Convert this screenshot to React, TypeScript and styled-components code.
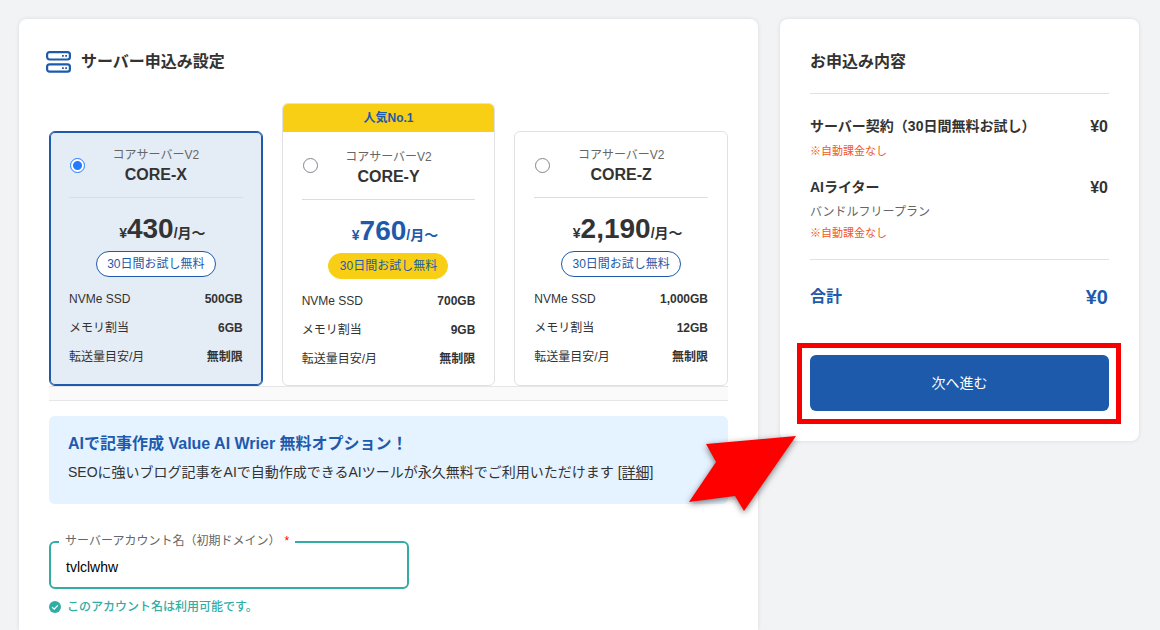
import React, { useState } from "react";
import styled, { createGlobalStyle, css } from "styled-components";

const BLUE = "#1e5aab";
const YELLOW = "#f8cf15";
const TEAL = "#31ada5";
const RED = "#f90000";
const INK = "#333";
const LINE = "#e1e1e1";

const GlobalStyle = createGlobalStyle`
  *, *::before, *::after { box-sizing: border-box; }
  body {
    margin: 0;
    background: #f2f3f5;
    color: ${INK};
    font-family: "Liberation Sans", "Noto Sans CJK JP", sans-serif;
    font-size: 14px;
    line-height: 20px;
  }
  h1, h2, h3, p, dl, dd, ul { margin: 0; padding: 0; }
`;

const Page = styled.div`
  display: grid;
  grid-template-columns: minmax(0, 1fr) 359px;
  gap: 22px;
  min-height: 100vh;
  padding: 19px 21px 0 19px;
`;

const Panel = styled.section`
  background: #fff;
  border-radius: 8px;
  box-shadow: 0 0 4px rgba(0, 0, 0, 0.1);
`;

const Settings = styled(Panel)`
  padding: 31px 30px 14px;
  border-radius: 8px 8px 0 0;
`;

const Summary = styled(Panel)`
  position: relative;
  align-self: start;
  padding: 31px 30px 30px;
`;

const Heading = styled.h2`
  display: flex;
  align-items: center;
  gap: 10px;
  font-size: 16px;
  line-height: 24px;
  font-weight: 700;
`;

const SettingsHeading = styled(Heading)`
  margin: 0 -3px 29px;
`;

const Plans = styled.div`
  display: grid;
  grid-template-columns: repeat(3, minmax(0, 1fr));
  align-items: end;
  gap: 19px;
`;

const PlanCard = styled.label<{ $selected: boolean }>`
  display: block;
  border: 1px solid ${LINE};
  border-radius: 6px;
  background: #fff;
  overflow: hidden;
  cursor: pointer;
  ${(p) =>
    p.$selected &&
    css`
      border-color: ${BLUE};
      background: #e4ecf5;
      box-shadow: inset 0 0 0 1px ${BLUE};
    `}
`;

const Ribbon = styled.div`
  margin: 0 -1px;
  background: ${YELLOW};
  color: ${BLUE};
  font-size: 12px;
  line-height: 28px;
  font-weight: 700;
  text-align: center;
`;

const PlanBody = styled.div<{ $featured: boolean }>`
  padding: ${(p) => (p.$featured ? "14px 19px 11px" : "14px 19px 13px")};
`;

const PlanHead = styled.div<{ $featured: boolean }>`
  display: grid;
  grid-template-columns: 16px 1fr 16px;
  padding-bottom: 11px;
  border-bottom: 1px solid #d9dee3;
  text-align: center;
  & > div { padding-top: ${(p) => (p.$featured ? 2 : 0)}px; }
`;

const Radio = styled.input`
  appearance: none;
  width: 15px;
  height: 15px;
  margin: 12px 0 0 1px;
  border: 1px solid #85858f;
  border-radius: 50%;
  background: #fff;
  &:checked {
    border-color: #237bff;
    background: radial-gradient(circle, #237bff 4px, #fff 5px);
  }
`;

const Series = styled.p`
  color: #666;
  font-size: 12px;
  line-height: 18px;
`;

const PlanName = styled.h3`
  font-size: 16px;
  line-height: 22px;
`;

const Price = styled.p<{ $featured: boolean }>`
  margin: 11px 0 2px;
  padding-left: 13px;
  color: ${(p) => (p.$featured ? BLUE : INK)};
  font-size: 28px;
  line-height: 40px;
  font-weight: 700;
  text-align: center;
  white-space: nowrap;
`;

const Small = styled.span`
  font-size: 14px;
  line-height: 20px;
`;

const Trial = styled.p<{ $featured: boolean }>`
  width: 120px;
  margin: 0 auto 8px;
  border: 1px solid ${(p) => (p.$featured ? YELLOW : BLUE)};
  border-radius: 13px;
  background: ${(p) => (p.$featured ? YELLOW : "#fff")};
  color: ${BLUE};
  font-size: 12px;
  line-height: 24px;
  text-align: center;
`;

const Specs = styled.table`
  width: 100%;
  border-collapse: collapse;
  font-size: 12px;
  line-height: 29px;
  th, td { padding: 0; }
  th { font-weight: 400; text-align: left; }
  td { font-weight: 700; text-align: right; }
`;

const Strip = styled.div`
  height: 15px;
  margin-bottom: 15px;
  border: solid #e6e6e6;
  border-width: 1px 0;
  background: #fafafa;
`;

const Notice = styled.div`
  padding: 17px 19px 21px;
  border-radius: 6px;
  background: #e5f2ff;
`;

const NoticeTitle = styled.h3`
  margin-bottom: 6px;
  color: ${BLUE};
  font-size: 16px;
  line-height: 22px;
`;

const NoticeText = styled.p`
  line-height: 22px;
  a { color: inherit; text-underline-offset: 2px; }
`;

const Field = styled.fieldset`
  width: 360px;
  max-width: 100%;
  margin: 30px 0 0;
  padding: 0 8px 4px;
  border: 2px solid ${TEAL};
  border-radius: 6px;
`;

const Legend = styled.legend`
  padding: 0 6px 2px;
  color: #666;
  font-size: 12px;
  line-height: 14px;
`;

const Required = styled.span`
  padding-left: 4px;
  color: #f00;
`;

const TextInput = styled.input`
  display: block;
  width: 100%;
  height: 33px;
  padding: 0 7px;
  border: 0;
  outline: 0;
  background: transparent;
  color: #000;
  font: inherit;
  font-size: 14px;
`;

const Hint = styled.p`
  display: flex;
  align-items: center;
  gap: 6px;
  margin-top: 9px;
  color: ${TEAL};
  font-size: 12px;
  line-height: 18px;
  font-weight: 500;
`;

const Items = styled.ul`
  display: grid;
  gap: 18px;
  margin-top: 19px;
  padding: 22px 0 18px;
  border: solid ${LINE};
  border-width: 1px 0;
  list-style: none;
`;

const ItemLine = styled.div`
  display: flex;
  justify-content: space-between;
  padding-right: 1px;
  font-weight: 700;
`;

const Amount = styled.span`
  font-size: 16px;
  line-height: 22px;
  margin-bottom: -2px;
`;

const Detail = styled.p`
  margin: 7px 0 -2px;
  color: #666;
  font-size: 12px;
  line-height: 16px;
`;

const Caution = styled.p`
  margin-top: 7px;
  color: #ee5a24;
  font-size: 11px;
  line-height: 16px;
`;

const Total = styled.div`
  display: flex;
  justify-content: space-between;
  margin: 25px 0 46px;
  padding-right: 1px;
  color: ${BLUE};
  font-size: 16px;
  line-height: 24px;
  font-weight: 700;
`;

const TotalAmount = styled.span`
  font-size: 20px;
`;

const ButtonArea = styled.div`
  position: relative;
`;

const NextButton = styled.button`
  display: block;
  width: 100%;
  height: 56px;
  border: 0;
  border-radius: 6px;
  background: ${BLUE};
  color: #fff;
  font: inherit;
  cursor: pointer;
`;

const Highlight = styled.div`
  position: absolute;
  inset: -12px -12px -13px -13px;
  border: 5px solid ${RED};
  pointer-events: none;
`;

const Arrow = styled.svg`
  position: absolute;
  left: -91px;
  bottom: -70px;
  overflow: visible;
  filter: drop-shadow(0 2px 3px rgba(0, 0, 0, 0.5));
  pointer-events: none;
`;

const plans = [
  { id: "x", name: "CORE-X", price: "430", specs: ["500GB", "6GB", "無制限"] },
  { id: "y", name: "CORE-Y", price: "760", specs: ["700GB", "9GB", "無制限"], featured: true },
  { id: "z", name: "CORE-Z", price: "2,190", specs: ["1,000GB", "12GB", "無制限"] },
];

const specLabels = ["NVMe SSD", "メモリ割当", "転送量目安/月"];

const items = [
  { name: "サーバー契約（30日間無料お試し）", amount: "¥0" },
  { name: "AIライター", detail: "バンドルフリープラン", amount: "¥0" },
];

function ServerIcon() {
  return (
    <svg width="25" height="22" viewBox="0 0 25 22" fill="none" aria-hidden="true">
      <rect x="1.1" y="1.1" width="22.8" height="7.4" rx="2.4" stroke={BLUE} strokeWidth="2.2" />
      <rect x="1.1" y="13.3" width="22.8" height="7.4" rx="2.4" stroke={BLUE} strokeWidth="2.2" />
      <path d="M16 4h1.8v1.8H16zM19.2 4H21v1.8h-1.8zM16 16.2h1.8V18H16zM19.2 16.2H21V18h-1.8z" fill={BLUE} />
    </svg>
  );
}

function CheckIcon() {
  return (
    <svg width="12" height="12" viewBox="0 0 12 12" fill="none" aria-hidden="true">
      <circle cx="6" cy="6" r="6" fill={TEAL} />
      <path d="M3.2 6.2 5.2 8.1 8.8 4.4" stroke="#fff" strokeWidth="1.3" />
    </svg>
  );
}

export default function App() {
  const [selected, setSelected] = useState("x");
  const [account, setAccount] = useState("tvlclwhw");

  return (
    <>
      <GlobalStyle />
      <Page>
        <Settings>
          <SettingsHeading>
            <ServerIcon />
            サーバー申込み設定
          </SettingsHeading>
          <Plans>
            {plans.map((plan) => {
              const featured = !!plan.featured;
              return (
                <PlanCard key={plan.id} $selected={selected === plan.id}>
                  {featured && <Ribbon>人気No.1</Ribbon>}
                  <PlanBody $featured={featured}>
                    <PlanHead $featured={featured}>
                      <Radio
                        type="radio"
                        name="plan"
                        checked={selected === plan.id}
                        onChange={() => setSelected(plan.id)}
                      />
                      <div>
                        <Series>コアサーバーV2</Series>
                        <PlanName>{plan.name}</PlanName>
                      </div>
                    </PlanHead>
                    <Price $featured={featured}>
                      <Small>¥</Small>
                      {plan.price}
                      <Small>/月〜</Small>
                    </Price>
                    <Trial $featured={featured}>30日間お試し無料</Trial>
                    <Specs>
                      <tbody>
                        {specLabels.map((label, i) => (
                          <tr key={label}>
                            <th scope="row">{label}</th>
                            <td>{plan.specs[i]}</td>
                          </tr>
                        ))}
                      </tbody>
                    </Specs>
                  </PlanBody>
                </PlanCard>
              );
            })}
          </Plans>
          <Strip />
          <Notice>
            <NoticeTitle>AIで記事作成 Value AI Wrier 無料オプション！</NoticeTitle>
            <NoticeText>
              SEOに強いブログ記事をAIで自動作成できるAIツールが永久無料でご利用いただけます{" "}
              <a href="#detail">[詳細]</a>
            </NoticeText>
          </Notice>
          <Field>
            <Legend>
              <label htmlFor="account">
                サーバーアカウント名（初期ドメイン）<Required>*</Required>
              </label>
            </Legend>
            <TextInput
              id="account"
              type="text"
              value={account}
              onChange={(e) => setAccount(e.target.value)}
            />
          </Field>
          <Hint>
            <CheckIcon />
            このアカウント名は利用可能です。
          </Hint>
        </Settings>
        <Summary>
          <Heading>お申込み内容</Heading>
          <Items>
            {items.map((item) => (
              <li key={item.name}>
                <ItemLine>
                  <span>{item.name}</span>
                  <Amount>{item.amount}</Amount>
                </ItemLine>
                {item.detail && <Detail>{item.detail}</Detail>}
                <Caution>※自動課金なし</Caution>
              </li>
            ))}
          </Items>
          <Total>
            <span>合計</span>
            <TotalAmount>¥0</TotalAmount>
          </Total>
          <ButtonArea>
            <NextButton type="button">次へ進む</NextButton>
            <Highlight />
          </ButtonArea>
          <Arrow width="107" height="75" viewBox="0 0 107 75" aria-hidden="true">
            <path d="M107 0 17 8 27 26 0 66 46 60 55 75Z" fill="#f00" />
          </Arrow>
        </Summary>
      </Page>
    </>
  );
}
